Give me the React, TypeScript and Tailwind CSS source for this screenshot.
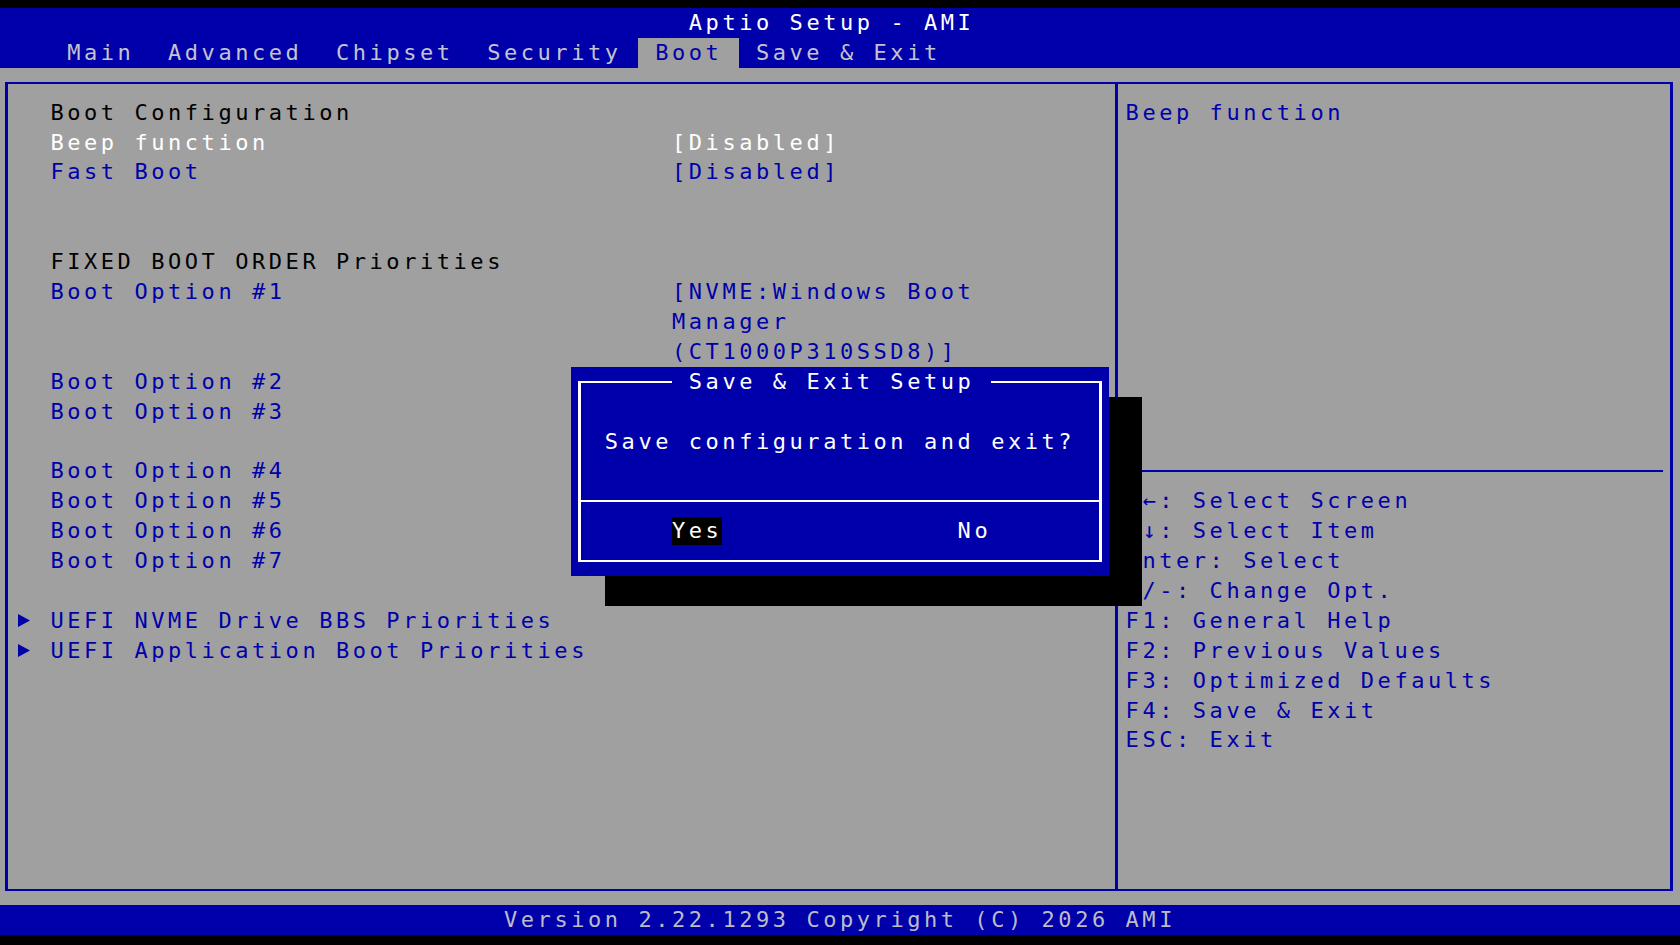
import React from "react";

// Aptio BIOS screen on a 100 x 31 character grid (16.8px x 29.9px cells)

type Row = {
  label?: string;
  value?: string[];
  lc?: string;
  vc?: string;
  arrow?: boolean;
};

const leftRows: Row[] = [
  { label: "Boot Configuration", lc: "text-black" },
  { label: "Beep function", value: ["[Disabled]"], lc: "text-white", vc: "text-white" },
  { label: "Fast Boot", value: ["[Disabled]"] },
  {},
  {},
  { label: "FIXED BOOT ORDER Priorities", lc: "text-black" },
  { label: "Boot Option #1", value: ["[NVME:Windows Boot", "Manager", "(CT1000P310SSD8)]"] },
  {},
  {},
  { label: "Boot Option #2" },
  { label: "Boot Option #3" },
  {},
  { label: "Boot Option #4" },
  { label: "Boot Option #5" },
  { label: "Boot Option #6" },
  { label: "Boot Option #7" },
  {},
  { label: "UEFI NVME Drive BBS Priorities", arrow: true },
  { label: "UEFI Application Boot Priorities", arrow: true },
];

const helpLines = [
  "→←: Select Screen",
  "↑↓: Select Item",
  "Enter: Select",
  "+/-: Change Opt.",
  "F1: General Help",
  "F2: Previous Values",
  "F3: Optimized Defaults",
  "F4: Save & Exit",
  "ESC: Exit",
];

const tabs = ["Main", "Advanced", "Chipset", "Security", "Boot", "Save & Exit"];

function Triangle() {
  return (
    <svg width="14" height="15" viewBox="0 0 14 15">
      <polygon points="1,1 13,7.5 1,14" fill="#0000aa" />
    </svg>
  );
}

function MenuRow({ row }: { row: Row }) {
  return (
    <div className="flex h-[29.9px] leading-[29.9px] whitespace-pre">
      <div className="w-[33.6px] flex items-center">{row.arrow && <Triangle />}</div>
      <div className={`w-[621.6px] ${row.lc ?? "text-[#0000aa]"}`}>{row.label}</div>
      <div className={row.vc ?? "text-[#0000aa]"}>
        {row.value?.map((v, i) => (
          <div key={i}>{v}</div>
        ))}
      </div>
    </div>
  );
}

export default function App() {
  return (
    <div className="relative w-[1680px] h-[945px] bg-black flex flex-col overflow-hidden font-['DejaVu_Sans_Mono','Liberation_Mono',monospace] text-[22px] tracking-[3.554px] leading-[29.9px]">
      <div className="h-[8px]" />

      {/* Header */}
      <header className="h-[60px] bg-[#0000aa] flex flex-col">
        <div className="h-[29.9px] pl-[688.8px] text-white whitespace-pre">Aptio Setup - AMI</div>
        <nav className="h-[30.1px] pl-[50.4px] flex whitespace-pre">
          {tabs.map((t) => (
            <span
              key={t}
              className={
                t === "Boot"
                  ? "px-[16.8px] bg-[#a0a0a0] text-[#0000aa]"
                  : "px-[16.8px] text-[#c4c4cc]"
              }
            >
              {t}
            </span>
          ))}
        </nav>
      </header>

      {/* Body */}
      <main className="h-[837px] bg-[#a0a0a0] pt-[14px] pb-[14px] pl-[5px] pr-[7px]">
        <div className="h-full flex border-x-[3px] border-y-[2px] border-[#0000aa]">
          <section className="w-[1107px] pl-[8.8px] pt-[13.7px] flex flex-col">
            {leftRows.map((r, i) => (
              <MenuRow key={i} row={r} />
            ))}
          </section>

          <div className="w-[3px] bg-[#0000aa]" />

          <aside className="flex-1 pl-[7.6px] pt-[13.7px] flex flex-col whitespace-pre text-[#0000aa]">
            <div className="h-[29.9px]">Beep function</div>
            <div className="h-[328.9px]" />
            <div className="h-[29.9px] flex items-center">
              <div className="w-[537.6px] h-[2px] bg-[#0000aa]" />
            </div>
            {helpLines.map((l) => (
              <div key={l} className="h-[29.9px]">
                {l}
              </div>
            ))}
          </aside>
        </div>
      </main>

      {/* Footer */}
      <footer className="h-[30px] bg-[#0000aa] pl-[504px] text-[#bcbcc8] whitespace-pre">
        Version 2.22.1293 Copyright (C) 2026 AMI
      </footer>
      <div className="h-[10px]" />

      {/* Dialog shadow */}
      <div className="absolute left-[604.8px] top-[396.7px] w-[537.6px] h-[209.3px] bg-black" />

      {/* Save & Exit dialog */}
      <div className="absolute left-[571.2px] top-[366.8px] w-[537.6px] h-[209.3px] bg-[#0000aa] pt-[14px] pl-[7px]">
        <div className="relative w-[524px] h-[181px] border-x-[3px] border-y-[2px] border-white flex flex-col text-white whitespace-pre">
          <div className="absolute left-[90.8px] top-[-16px] h-[29.9px] bg-[#0000aa]"> Save & Exit Setup </div>
          <div className="h-[43.8px]" />
          <div className="h-[29.9px] pl-[23.6px]">Save configuration and exit?</div>
          <div className="h-[43.9px]" />
          <div className="h-[2px] bg-white" />
          <div className="h-[13.9px]" />
          <div className="h-[29.9px] flex items-center">
            <span className="ml-[90.8px] h-[28px] leading-[28px] bg-black">Yes</span>
            <span className="ml-[235.2px]">No</span>
          </div>
        </div>
      </div>
    </div>
  );
}
